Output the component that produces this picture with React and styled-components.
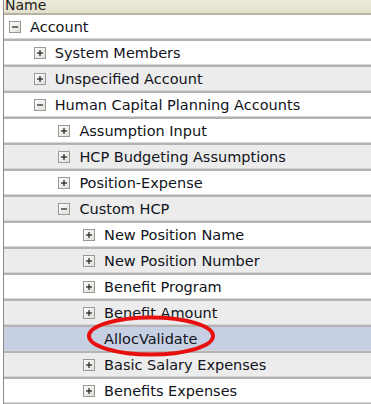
import React from 'react'
import styled, { createGlobalStyle } from 'styled-components'

const GlobalStyle = createGlobalStyle`
  html, body { margin: 0; padding: 0; background: #ffffff; }
  body { font-family: "DejaVu Sans", Tahoma, sans-serif; }
`

const rows = [
  { label: 'Account', level: 0, toggle: 'minus', tone: 'white' },
  { label: 'System Members', level: 1, toggle: 'plus', tone: 'white' },
  { label: 'Unspecified Account', level: 1, toggle: 'plus', tone: 'gray' },
  { label: 'Human Capital Planning Accounts', level: 1, toggle: 'minus', tone: 'white' },
  { label: 'Assumption Input', level: 2, toggle: 'plus', tone: 'white' },
  { label: 'HCP Budgeting Assumptions', level: 2, toggle: 'plus', tone: 'gray' },
  { label: 'Position-Expense', level: 2, toggle: 'plus', tone: 'white' },
  { label: 'Custom HCP', level: 2, toggle: 'minus', tone: 'gray' },
  { label: 'New Position Name', level: 3, toggle: 'plus', tone: 'white' },
  { label: 'New Position Number', level: 3, toggle: 'plus', tone: 'gray' },
  { label: 'Benefit Program', level: 3, toggle: 'plus', tone: 'white' },
  { label: 'Benefit Amount', level: 3, toggle: 'plus', tone: 'gray' },
  { label: 'AllocValidate', level: 3, toggle: null, tone: 'selected' },
  { label: 'Basic Salary Expenses', level: 3, toggle: 'plus', tone: 'gray' },
  { label: 'Benefits Expenses', level: 3, toggle: 'plus', tone: 'white' },
]

const tones = {
  white: '#ffffff',
  gray: '#ececec',
  selected: '#c6d0e2',
}

const ToggleBox = ({ kind }) => (
  <Box>
    <svg width="12" height="12" viewBox="0 0 12 12">
      <defs>
        <linearGradient id="boxfill" x1="0" y1="0" x2="1" y2="1">
          <stop offset="0" stopColor="#ffffff" />
          <stop offset="1" stopColor="#dedcd4" />
        </linearGradient>
      </defs>
      <rect x="0.5" y="0.5" width="11" height="11" fill="url(#boxfill)" stroke="#989896" />
      <line x1="3" y1="6" x2="9" y2="6" stroke="#1e1e1e" strokeWidth="1.2" />
      {kind === 'plus' && <line x1="6" y1="3" x2="6" y2="9" stroke="#1e1e1e" strokeWidth="1.2" />}
    </svg>
  </Box>
)

const App = () => {
  return (
    <>
      <GlobalStyle />
      <Frame>
        <Header><span>Name</span></Header>
        <Tree>
          {rows.map((r, i) => (
            <Row key={i} $tone={r.tone}>
              <Indent $level={r.level}>
                {r.toggle ? <ToggleBox kind={r.toggle} /> : <BoxSpacer />}
                <Label>{r.label}</Label>
              </Indent>
            </Row>
          ))}
          <Highlight width="134" height="44" viewBox="0 0 134 44">
            <ellipse cx="67" cy="22" rx="62" ry="18.5" fill="none" stroke="#e8100f" strokeWidth="4" />
          </Highlight>
        </Tree>
      </Frame>
    </>
  )
}

const Frame = styled.div`
  width: 368px;
  height: 404px;
  overflow: hidden;
  border-left: 1px solid #8c8c8c;
  margin-left: 3px;
  box-sizing: border-box;
  background: #fff;
`

const Header = styled.div`
  height: 13px;
  overflow: hidden;
  display: flex;
  align-items: flex-end;
  background: linear-gradient(#ecebdc, #e3e1cc);
  border-bottom: 2px solid #b5b3a3;
  box-shadow: 0 1px 0 #d8d7cc;
  span {
    font-size: 14px;
    line-height: 14px;
    color: #1d1d1d;
    padding-left: 1px;
    margin-bottom: 1px;
  }
`

const Tree = styled.div`
  position: relative;
`

const Row = styled.div`
  height: 24px;
  background: ${p => tones[p.$tone]};
  border-bottom: 2px solid #b3b3b3;
  box-shadow: inset 0 -1px 0 #d6d6d6;
  display: flex;
  align-items: center;
`

const Indent = styled.div`
  display: flex;
  align-items: center;
  padding-left: ${p => 5 + p.$level * 24.7}px;
  gap: 9px;
`

const Box = styled.span`
  display: inline-flex;
  width: 12px;
  height: 12px;
`

const BoxSpacer = styled.span`
  display: inline-block;
  width: 12px;
`

const Label = styled.span`
  font-size: 14.5px;
  color: #111320;
  white-space: nowrap;
`

const Highlight = styled.svg`
  position: absolute;
  left: 80px;
  top: 299px;
  pointer-events: none;
`

export default App
